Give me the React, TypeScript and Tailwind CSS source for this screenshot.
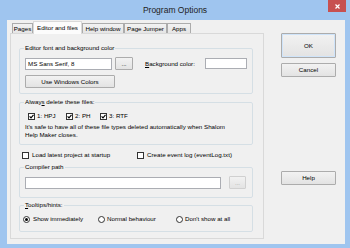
import type { ReactNode } from "react";

const btn =
  "flex items-center justify-center border border-[#acacac] bg-linear-to-b from-[#f2f2f2] to-[#e3e3e3] rounded-[1px]";

function Button({ children, className }: { children: ReactNode; className?: string }) {
  return <div className={`${btn} ${className ?? ""}`}>{children}</div>;
}

function Check({ checked }: { checked?: boolean }) {
  return (
    <span className="flex h-[7px] w-[7px] shrink-0 items-center justify-center border border-[#333333] bg-white">
      {checked && (
        <svg viewBox="0 0 5 5" className="h-[5px] w-[5px]">
          <path d="M0.6 2.4 L2 3.9 L4.5 0.8" stroke="#000" strokeWidth="1.1" fill="none" />
        </svg>
      )}
    </span>
  );
}

function Radio({ on }: { on?: boolean }) {
  return (
    <span className="flex h-[7px] w-[7px] shrink-0 items-center justify-center rounded-full border border-[#333333] bg-white">
      {on && <span className="h-[3px] w-[3px] rounded-full bg-black" />}
    </span>
  );
}

function Tab({ label, width, active }: { label: string; width: string; active?: boolean }) {
  if (active) {
    return (
      <div
        className={`${width} relative z-10 -mb-px flex h-[13px] items-center justify-center border border-b-0 border-[#d9d9d9] bg-[#fcfcfc] pb-[1px]`}
      >
        {label}
      </div>
    );
  }
  return (
    <div
      className={`${width} flex h-[10px] items-center justify-center border border-b-0 border-[#acacac] bg-linear-to-b from-[#f2f2f2] to-[#e5e5e5]`}
    >
      {label}
    </div>
  );
}

export default function App() {
  return (
    <div className="flex h-[248px] w-[350px] flex-col overflow-hidden bg-[#9fc5ef] font-['Liberation_Sans',Arial,sans-serif] text-[6.2px] leading-[8px] text-black">
      {/* Title bar */}
      <div className="grid h-[20px] grid-cols-[1fr_auto_1fr]">
        <div />
        <div className="self-center text-[8.5px] leading-none text-[#222222]">Program Options</div>
        <div className="mr-[4px] flex h-[12px] w-[18px] items-center justify-center justify-self-end bg-[#c75050]">
          <svg viewBox="0 0 5 5" className="h-[5px] w-[5px]">
            <path d="M0.5 0.5 L4.5 4.5 M4.5 0.5 L0.5 4.5" stroke="#fff" strokeWidth="1.2" />
          </svg>
        </div>
      </div>

      {/* Client area */}
      <div className="mb-[4px] ml-[7px] mr-[5px] flex flex-1 bg-[#f0f0f0]">
        <div className="flex flex-col pl-[3px] pt-[1px]">
          {/* Tabs */}
          <div className="flex h-[12px] items-end pl-[2px]">
            <Tab label="Pages" width="w-[21px]" />
            <Tab label="Editor and files" width="w-[49px]" active />
            <Tab label="Help window" width="w-[42px]" />
            <Tab label="Page Jumper" width="w-[43px]" />
            <Tab label="Apps" width="w-[24px]" />
          </div>

          {/* Tab page */}
          <div className="flex h-[206px] w-[254px] flex-col border border-[#d9d9d9] bg-[#f0f0f0] pl-[8px]">
            <fieldset className="mt-[10px] h-[50px] w-[234px] rounded-[2px] border border-[#d5dfe5] px-[5px]">
              <legend className="-ml-px px-[1px]">Editor font and background color</legend>
              <div className="mt-[5px] flex h-[13px] items-center">
                <div className="flex h-[12px] w-[87px] items-center border border-[#abadb3] bg-white pl-[2px]">
                  MS Sans Serif, 8
                </div>
                <Button className="ml-[3px] h-[13px] w-[18px]">...</Button>
                <span className="ml-[12px]">
                  <span className="underline">B</span>ackground color:
                </span>
                <div className="ml-auto h-[11px] w-[42px] border border-[#abadb3] bg-white" />
              </div>
              <Button className="mt-[5px] h-[13px] w-[90px]">Use Windows Colors</Button>
            </fieldset>

            <fieldset className="mt-[4px] h-[47px] w-[234px] rounded-[2px] border border-[#d5dfe5] px-[5px]">
              <legend className="-ml-px px-[1px]">
                Alway<span className="underline">s</span> delete these files:
              </legend>
              <div className="ml-[3px] mt-[6px] flex h-[8px] items-center">
                <span className="flex w-[38px] items-center gap-[2px]">
                  <Check checked />
                  1: HPJ
                </span>
                <span className="flex w-[34px] items-center gap-[2px]">
                  <Check checked />
                  2: PH
                </span>
                <span className="flex items-center gap-[2px]">
                  <Check checked />
                  3: RTF
                </span>
              </div>
              <p className="mt-[3px] whitespace-nowrap leading-[7.5px]">
                It's safe to have all of these file types deleted automatically when Shalom
                <br />
                Help Maker closes.
              </p>
            </fieldset>

            <div className="ml-[3px] mt-[6px] flex h-[8px] items-center">
              <span className="flex w-[115px] items-center gap-[3px]">
                <Check />
                Load latest project at startup
              </span>
              <span className="flex items-center gap-[3px]">
                <Check />
                Create event log (eventLog.txt)
              </span>
            </div>

            <fieldset className="mt-[4px] h-[35px] w-[234px] rounded-[2px] border border-[#d5dfe5] px-[5px]">
              <legend className="-ml-px px-[1px]">Compiler path</legend>
              <div className="mt-[5px] flex items-end">
                <div className="h-[12px] w-[196px] border border-[#abadb3] bg-white" />
                <Button className="ml-[8px] h-[13px] w-[17px] border-[#d0d0d0] text-[#a0a0a0]">...</Button>
              </div>
            </fieldset>

            <fieldset className="mt-[3px] h-[31px] w-[234px] rounded-[2px] border border-[#d5dfe5] px-[5px]">
              <legend className="-ml-px px-[1px]">
                <span className="underline">T</span>ooltips/hints:
              </legend>
              <div className="-ml-[2px] mt-[6px] flex h-[8px] items-center">
                <span className="flex w-[75px] items-center gap-[3px]">
                  <Radio on />
                  Show immediately
                </span>
                <span className="flex w-[78px] items-center gap-[2px]">
                  <Radio />
                  Normal behaviour
                </span>
                <span className="flex items-center gap-[2px]">
                  <Radio />
                  Don't show at all
                </span>
              </div>
            </fieldset>
          </div>
        </div>

        {/* Dialog buttons */}
        <div className="ml-[17px] flex flex-col pt-[13px]">
          <Button className="h-[25px] w-[55px] border-[#7eb4ea] shadow-[inset_0_0_0_1px_#cfe4fa]">OK</Button>
          <Button className="mt-[5px] h-[14px] w-[55px]">Cancel</Button>
          <Button className="mt-[94px] h-[14px] w-[55px]">Help</Button>
        </div>
      </div>
    </div>
  );
}
